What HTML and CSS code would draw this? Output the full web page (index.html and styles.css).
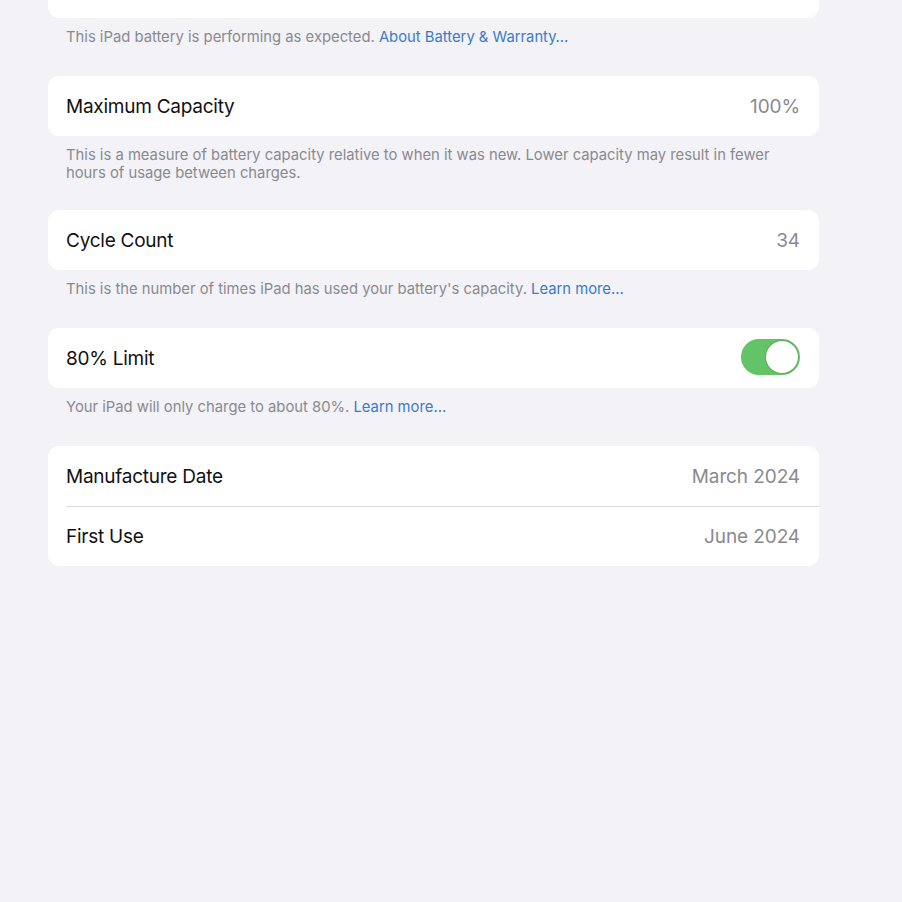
FILE: index.html
```html
<!DOCTYPE html>
<html lang="en">

<head>
    <meta charset="UTF-8">
    <meta name="viewport" content="width=device-width, initial-scale=1.0">
    <title>Battery Health</title>
    <link rel="stylesheet" href="styles.css">
</head>

<body>

    <div class="list">
        <div class="group">
            <div class="card card-top"></div>
            <p class="footer">This iPad battery is performing as expected. <a href="#">About Battery &amp; Warranty…</a></p>
        </div>

        <div class="group">
            <div class="card">
                <div class="row">
                    <span class="label">Maximum Capacity</span>
                    <span class="value">100%</span>
                </div>
            </div>
            <p class="footer footer-long">This is a measure of battery capacity relative to when it was new. Lower capacity may result in fewer hours of usage between charges.</p>
        </div>

        <div class="group">
            <div class="card">
                <div class="row">
                    <span class="label">Cycle Count</span>
                    <span class="value">34</span>
                </div>
            </div>
            <p class="footer">This is the number of times iPad has used your battery's capacity. <a href="#">Learn more…</a></p>
        </div>

        <div class="group">
            <div class="card">
                <div class="row">
                    <span class="label">80% Limit</span>
                    <span class="toggle on"><span class="knob"></span></span>
                </div>
            </div>
            <p class="footer">Your iPad will only charge to about 80%. <a href="#">Learn more…</a></p>
        </div>

        <div class="group">
            <div class="card">
                <div class="row">
                    <span class="label">Manufacture Date</span>
                    <span class="value">March 2024</span>
                </div>
                <div class="row">
                    <span class="label">First Use</span>
                    <span class="value">June 2024</span>
                </div>
            </div>
        </div>
    </div>

</body>

</html>
```

FILE: styles.css
```css
html,
body {
    height: 100%;
}

body {
    margin: 0;
    background-color: #f2f2f7;
    font-family: Inter, "Noto Sans", sans-serif;
    color: #000;
}

.list {
    width: 771px;
    margin-left: 48px;
}

.group {
    margin-bottom: 30px;
}

.card {
    background-color: #fff;
    border-radius: 11px;
    overflow: hidden;
}

.card-top {
    height: 40px;
    margin-top: -22px;
}

.row {
    display: flex;
    align-items: center;
    justify-content: space-between;
    height: 60px;
    padding: 0 19px 0 18px;
    position: relative;
}

.row + .row::before {
    content: "";
    position: absolute;
    top: 0;
    left: 18px;
    right: 0;
    border-top: 1px solid #dcdce0;
}

.label {
    font-size: 19px;
    letter-spacing: -0.25px;
    color: #111;
}

.value {
    font-size: 19px;
    color: #8a8a8e;
    letter-spacing: -0.1px;
}

.footer {
    margin: 0;
    padding: 10px 30px 0 18px;
    font-size: 14.8px;
    line-height: 18px;
    color: #8a8a8e;
}

.footer-long {
    margin-bottom: -2px;
}

.footer a {
    color: #3b7bc8;
    text-decoration: none;
}

.toggle {
    display: flex;
    align-items: center;
    width: 59px;
    height: 36px;
    margin-top: -3px;
    border-radius: 18px;
    background-color: #62c466;
    box-sizing: border-box;
    padding: 2px;
}

.toggle.on {
    justify-content: flex-end;
}

.knob {
    width: 32px;
    height: 32px;
    border-radius: 50%;
    background-color: #fff;
    box-shadow: 0 0 0 1px #5aae5e;
}
```
